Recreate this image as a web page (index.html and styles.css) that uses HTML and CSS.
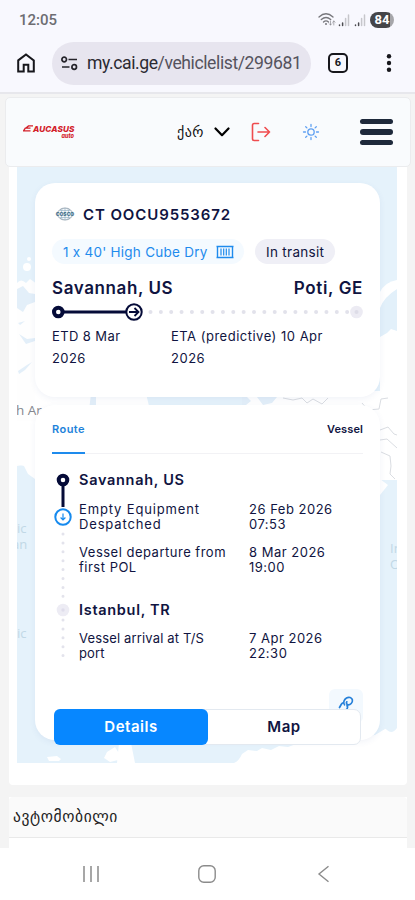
FILE: index.html
```html
<!DOCTYPE html>
<html lang="ka">
<head>
<meta charset="utf-8">
<meta name="viewport" content="width=device-width, initial-scale=1">
<title>my.cai.ge</title>
<link rel="stylesheet" href="styles.css">
</head>
<body>
<div class="statusbar">
  <span class="clock">12:05</span>
  <span class="status-icons">
    <svg width="49" height="16" viewBox="0 0 49 16" fill="none" stroke="#77777c" stroke-width="1.3" stroke-linecap="round">
      <path d="M1 5Q8 -1.500 15 5M3.300 7.500Q8 3.400 12.700 7.500M5.500 10Q8 7.700 10.500 10"/>
      <circle cx="8" cy="12" r="1" fill="#77777c" stroke="none"/>
      <path d="M12.500 9v4m-1.200-1.200 1.200 1.200 1.200-1.200M15.800 13v-4m-1.200 1.200 1.200-1.200 1.200 1.200" stroke-width=".6"/>
      <path d="M21.500 13v.6M24.600 11v2.600M37.500 13v.6M40.600 11v2.600" stroke="#4b4b50" stroke-width="1.500"/>
      <path d="M27.600 6.500v7.100M30.500 3v10.600M43.600 6.500v7.100M46.500 3v10.600" stroke="#c6c6cb" stroke-width="1.500"/>
    </svg>
    <span class="battery">84</span>
  </span>
</div>
<div class="toolbar">
  <svg class="home" width="18" height="20" viewBox="0 0 18 20" fill="none" stroke="#17171c" stroke-width="2"><path d="M1.200 7.400 9 1.400l7.800 6V18.600H11.300V11.800H6.700V18.600H1.200Z"/></svg>
  <div class="urlbar">
    <svg width="17" height="15" viewBox="0 0 17 15" fill="none" stroke="#25242b" stroke-width="1.700"><circle cx="3.200" cy="3.500" r="2.300"/><path d="M7.500 3.500H16M1 11h7.500"/><circle cx="13.200" cy="11" r="2.300"/></svg>
    <span class="url">my.cai.ge<span>/vehiclelist/299681</span></span>
  </div>
  <span class="tabs-count">6</span>
  <svg class="dots" width="6" height="18" viewBox="0 0 6 18" fill="#17171c"><circle cx="3" cy="2.300" r="2.200"/><circle cx="3" cy="9" r="2.200"/><circle cx="3" cy="15.700" r="2.200"/></svg>
</div>
<main class="page">
  <header class="site-header">
    <div class="logo"><span class="logo-main"><svg width="10" height="7" viewBox="0 0 10 7" fill="none" stroke="#d3202a" stroke-width="1.400"><path d="M10 .9H5.500L3 3M7.500 3.100H2.300L.5 5.900H7.500"/></svg>AUCASUS</span><span class="logo-sub">auto</span></div>
    <span class="lang">ქარ</span>
    <svg class="chev" width="16" height="10" viewBox="0 0 16 10" fill="none" stroke="#000" stroke-width="2.200" stroke-linecap="round" stroke-linejoin="round"><path d="M1.500 1.500 8 8.200l6.500-6.700"/></svg>
    <svg class="logout" width="20" height="20" viewBox="0 0 20 20" fill="none" stroke="#ef4c4f" stroke-width="1.600" stroke-linecap="round" stroke-linejoin="round"><path d="M7.500 1.500H3.200Q1.500 1.500 1.500 3.200V16.800Q1.500 18.500 3.200 18.500H7.500M7 10H18.500M14 5.500 18.500 10 14 14.500"/></svg>
    <svg class="sun" width="18" height="18" viewBox="0 0 18 18" fill="none" stroke="#5fa0f2" stroke-width="1.300" stroke-linecap="round"><circle cx="9" cy="9" r="3.200"/><path d="M9 1.500v2M9 14.500v2M1.500 9h2M14.500 9h2M3.700 3.700l1.200 1.200M13.100 13.100l1.200 1.200M3.700 14.300l1.200-1.200M13.100 4.900l1.200-1.200"/></svg>
    <div class="burger"><i></i><i></i><i></i></div>
  </header>
  <section class="tracker">
    <div class="map">
      <svg class="map-bg" width="380" height="597" viewBox="0 0 380 597">
        <rect width="380" height="597" fill="#e5f2fb"/>
        <path fill="#fefefe" d="M0 117Q4 112 9 117L13 113 20 118V297L0 300Z"/>
        <circle cx="10" cy="101" r="4" fill="#fff"/><circle cx="12" cy="93" r="2" fill="#fff"/>
        <path fill="#e3eff9" d="M0 123l6-3 6 7 6 1v8l-8 3-4 7-6-4ZM1 157l7-2-5 4ZM2 168l8 5 8-1v3l-9 3ZM1 205l9-6 5-3-7 8-6 4Z"/>
        <path fill="#fff" d="M18 215H126l6 25v60H18ZM225 225H380V314H225Z"/>
        <path fill="#e3eff9" d="M74 228h5v16h-7ZM225 231h5l4 4-5 4h-4ZM240 231h20l-5 6-9 2Z"/>
        <path fill="#fff" d="M380 114q-12 2-17 12V314h17Z"/>
        <path fill="#e2f0fa" d="M363 142q4-11 17-19v42l-6-2-4 4-7 4Z"/>
        <path fill="#fff" d="M0 255H18v58l-7-5-4-8-7-2Z"/>
        <path d="M266 232l10 2 9-2 5 5 6-4 9 5 6-6M345 237l6 7 11-1 2-10 7-1M363 264l8-3 6 7 3 1M363 274l7-1 10 9M364 286l9 4 1 10-1 8 5 5" fill="none" stroke="#dadde2"/>
        <path fill="#fff" d="M363 313l8 6-8 10ZM363 544l17 6V597H217q5-2 8-9l6-4 9 1 5-3 9 2 8-4 9 1 11-4 9-4 20 4 10-1 17-4 20-3 15-9Z"/>
        <path fill="#e5f2fb" d="M363 530h17v32q-5 7-10 2l-7-6Z"/>
        <path fill="#fff" d="M30 591l10-1 4 3-2 2H32ZM87 592l3-6 8-5 5 8-2 5-8 2ZM102 577h12l4 20h-18Z"/>
        <text class="land" x="-1" y="249">h Ar</text>
        <text class="sea" x="0" y="367">ic</text><text class="sea" x="-5" y="383">an</text><text class="sea" x="0" y="472">ic</text>
        <text class="sea" x="373" y="387">In</text><text class="sea" x="373" y="403">Oc</text>
      </svg>
      <article class="card summary">
        <div class="container-row">
          <svg width="20" height="14" viewBox="0 0 20 14"><ellipse cx="10" cy="7" rx="7.500" ry="6" fill="#f5f8fa" stroke="#8a9ba9" stroke-width=".9"/><path d="M5 3.500h10M5 10.500h10M10 1v12M7 2q-2 5 0 10M13 2q2 5 0 10" fill="none" stroke="#8dabbf" stroke-width=".6"/><text x="10" y="9" class="cosco">COSCO</text></svg>
          <strong>CT OOCU9553672</strong>
        </div>
        <div class="badges">
          <span class="badge blue"><span>1 x 40' High Cube Dry</span><svg width="18" height="14" viewBox="0 0 18 14" fill="none" stroke="#1e8bed"><path d="M.5 1.500h17M.5 12.500h17M1.500 1v12M16.500 1v12" stroke-width="1.400"/><path d="M5 3.500v7M7.700 3.500v7M10.300 3.500v7M13 3.500v7" stroke-width="1.200"/></svg></span>
          <span class="badge gray">In transit</span>
        </div>
        <div class="ports"><b class="from">Savannah, US</b><b class="to">Poti, GE</b></div>
        <svg class="track" width="311" height="18" viewBox="0 0 311 18" fill="none"><path d="M6 9H75" stroke="#050b38" stroke-width="3"/><circle cx="6.300" cy="9" r="4.300" fill="#fff" stroke="#050b38" stroke-width="4"/><circle cx="82" cy="9" r="7.700" stroke="#050b38" stroke-width="2"/><path d="M77 9h9M82.500 5l4 4-4 4" stroke="#050b38" stroke-width="1.800"/><path d="M98.500 9H296" stroke="#e2e2eb" stroke-width="4" stroke-linecap="round" stroke-dasharray="0 10.350"/><circle cx="304.500" cy="9" r="6.300" fill="#ecebf3"/><circle cx="304.500" cy="9" r="2" fill="#dddce7"/></svg>
        <div class="dates"><span class="etd">ETD 8 Mar 2026</span><span class="eta">ETA (predictive) 10 Apr 2026</span></div>
      </article>
      <article class="card details">
        <div class="tabs"><span class="active">Route</span><span>Vessel</span></div>
        <div class="route">
          <svg width="18" height="190" viewBox="0 0 18 190" fill="none"><path d="M9 10V36" stroke="#050b38" stroke-width="3"/><circle cx="9" cy="9" r="4.300" fill="#fff" stroke="#050b38" stroke-width="4"/><path d="M9 63V131M9 149v40" stroke="#e3e3ec" stroke-width="3" stroke-linecap="round" stroke-dasharray="0 8.900"/><circle cx="9" cy="46" r="7.700" fill="#fff" stroke="#168aee" stroke-width="2"/><path d="M9 42.500v6M6.600 46.500l2.400 2.400 2.400-2.400" stroke="#168aee" stroke-width="1.200"/><circle cx="9" cy="139" r="6.300" fill="#edecf4"/><circle cx="9" cy="139" r="1.700" fill="#dfddeb"/></svg>
          <div class="stops">
            <h3 class="s1">Savannah, US</h3>
            <p><span class="wide">Empty Equipment<br>Despatched</span><span>26 Feb 2026<br>07:53</span></p>
            <p><span>Vessel departure from<br>first POL</span><span>8 Mar 2026<br>19:00</span></p>
            <h3 class="s2">Istanbul, TR</h3>
            <p><span class="narrow">Vessel arrival at T/S<br>port</span><span>7 Apr 2026<br>22:30</span></p>
          </div>
        </div>
        <div class="share"><svg width="16" height="16" viewBox="0 0 16 16" fill="none" stroke="#2680d9" stroke-width="1.700" stroke-linecap="round"><path d="M6.500 8.800C4.800 6.800 6 3.500 8.500 2c2.300-1.400 5.500-.5 5.900 2 .4 2.800-2.200 5-4.200 4.800C8.600 8.600 8 7 8.800 5.800M5.200 6.800Q3.900 7.300 3.200 8.500L1.500 11.500M9 9q1.500 3-1 5"/></svg></div>
      </article>
      <div class="switch"><span class="on">Details</span><span>Map</span></div>
    </div>
  </section>
  <section class="vehicle"><h2>ავტომობილი</h2></section>
</main>
<nav class="sysnav">
  <svg width="18" height="18" viewBox="0 0 18 18" stroke="#8b8b8b" stroke-width="1.500"><path d="M2 1v16M9 1v16M16 1v16"/></svg>
  <svg width="18" height="18" viewBox="0 0 18 18" fill="none" stroke="#8b8b8b" stroke-width="1.400"><rect x=".8" y=".8" width="16.400" height="16.400" rx="5"/></svg>
  <svg width="18" height="18" viewBox="0 0 18 18" fill="none" stroke="#8b8b8b" stroke-width="1.400"><path d="M14.500 1.200 5 9l9.500 7.800"/></svg>
</nav>
</body>
</html>
```
FILE: styles.css
```css
* { box-sizing: border-box; }
body { margin: 0; width: 415px; height: 900px; overflow: hidden; display: flex; flex-direction: column; background: #fff; font-family: Inter, "Noto Sans", sans-serif; color: #101441; }
svg { display: block; flex: none; }
h2, h3, p { margin: 0; }
.statusbar { height: 38px; background: #f8f8fe; display: flex; justify-content: space-between; align-items: center; padding: 1px 21px 0 19px; flex: none; }
.clock { font: 500 15px/20px Roboto, sans-serif; letter-spacing: 0; color: #6d6d72; }
.status-icons { display: flex; align-items: center; gap: 3px; }
.battery { width: 24px; height: 16px; border-radius: 8px; background: linear-gradient(90deg, #454549 84%, #a6a6aa 84%); color: #fff; font: 700 13px/16px Roboto, sans-serif; text-align: center; }
.toolbar { height: 56px; flex: none; background: #f8f8fe; border-bottom: 2px solid #e7e7ec; display: flex; align-items: center; padding: 0 23px 4px 17px; }
.urlbar { flex: none; width: 259px; height: 43px; border-radius: 22px; background: #e7e5ef; margin-left: 17px; padding-left: 9px; display: flex; align-items: center; gap: 9px; }
.url { font: 400 17.600px/24px Roboto, sans-serif; letter-spacing: -.42px; color: #2b2a32; white-space: nowrap; }
.url span { color: #55535d; }
.tabs-count { flex: none; width: 20px; height: 20px; border: 2px solid #17171c; border-radius: 5px; margin-left: 17px; font: 700 11px/16px Roboto, sans-serif; color: #17171c; text-align: center; }
.dots { margin-left: 38px; }
.page { height: 754px; flex: none; overflow: hidden; background: #f4f4f4; padding-top: 3px; }
.site-header { position: relative; z-index: 3; width: 406px; height: 70px; margin-left: 5px; background: #f9fbfd; border: 1px solid #ebecee; border-radius: 5px; display: flex; align-items: center; padding-left: 17px; }
.logo { width: 54px; display: flex; flex-direction: column; color: #d3202a; font-style: italic; font-weight: 800; }
.logo-main { display: flex; align-items: center; font-size: 8.200px; line-height: 8px; letter-spacing: .1px; }
.logo-sub { font-size: 5.500px; line-height: 7px; align-self: flex-end; margin-right: 3px; }
.lang { font: 14px/20px "DejaVu Sans", sans-serif; letter-spacing: .5px; color: #111; width: 28px; margin-left: 100px; }
.chev { margin-left: 9px; }
.logout { margin-left: 21px; }
.sun { margin-left: 31px; }
.burger { margin-left: 40px; width: 33px; display: flex; flex-direction: column; gap: 5px; }
.burger i { height: 5.300px; border-radius: 3px; background: #1e293b; }
.tracker { width: 398px; height: 618px; margin-left: 9px; background: #fff; padding-left: 8px; border-radius: 0 0 4px 4px; }
.map { width: 380px; height: 596px; position: relative; padding: 16px 17px 0 18px; }
.map-bg { position: absolute; left: 0; top: -1px; }
.land { font: 13.500px "Open Sans", sans-serif; fill: #85888e; }
.sea { font: 13px "Open Sans", sans-serif; fill: #c1d8e6; }
.card { position: relative; background: #fff; border-radius: 20px; padding: 0 17px; box-shadow: 0 2px 6px rgba(60,90,150,.07); }
.summary { height: 214px; padding-top: 20px; }
.container-row { display: flex; align-items: center; height: 22px; gap: 8px; padding-left: 3px; }
.container-row strong { font-size: 15px; font-weight: 600; letter-spacing: .9px; white-space: nowrap; }
.cosco { font: 800 5px Inter, sans-serif; fill: #356985; text-anchor: middle; }
.badges { display: flex; gap: 11px; margin-top: 14px; }
.badge { height: 25px; border-radius: 13px; display: flex; align-items: center; font-size: 13.500px; padding: 0 11px; white-space: nowrap; }
.blue { width: 192px; background: #f4faff; color: #1e8bed; justify-content: space-between; letter-spacing: .25px; padding-right: 10px; }
.gray { width: 80px; background: #efeff6; letter-spacing: .3px; }
.ports { display: flex; justify-content: space-between; margin-top: 13px; font-size: 17px; line-height: 22px; white-space: nowrap; }
.ports b, .stops h3 { font-weight: 600; }
.from { letter-spacing: .6px; }
.to { letter-spacing: .65px; }
.track { margin-top: 4px; }
.dates { display: flex; gap: 32px; font-size: 13px; line-height: 22px; margin-top: 4px; }
.etd { width: 87px; letter-spacing: .4px; }
.eta { width: 170px; letter-spacing: .5px; }
.details { height: 335px; margin-top: 8px; overflow: hidden; }
.tabs { height: 49px; display: flex; justify-content: space-between; border-bottom: 1px solid #f2f2f5; font-size: 11px; font-weight: 600; line-height: 16px; padding-top: 16px; letter-spacing: .1px; }
.tabs .active { letter-spacing: .45px; color: #1e83da; border-bottom: 2px solid #1e8bed; margin-bottom: -1px; }
.route { display: flex; margin: 17px 0 0 2px; gap: 7px; }
.stops h3 { font-size: 14.500px; line-height: 18px; letter-spacing: .7px; }
.stops p { display: grid; grid-template-columns: 170px 100px; font-size: 13px; line-height: 15.300px; letter-spacing: .5px; margin-top: 12.500px; white-space: nowrap; }
.stops .wide { letter-spacing: .85px; }
.stops .narrow { letter-spacing: .15px; }
.stops .s2 { margin-top: 25.500px; }
.share { width: 34px; height: 34px; margin: 27px 0 0 auto; border-radius: 6px; background: #f3f9fe; padding: 7px 0 0 9px; }
.switch { position: absolute; left: 37px; top: 542px; width: 307px; height: 36px; display: flex; background: #fff; border: 1px solid #e3e9f0; border-radius: 7px; font-size: 15px; font-weight: 600; line-height: 34px; letter-spacing: .5px; text-align: center; }
.switch span { flex: 1; }
.switch .on { flex: none; width: 154px; height: 36px; line-height: 36px; margin: -1px 0 0 -1px; background: #0787ff; color: #fff; border-radius: 6px; }
.vehicle { width: 398px; height: 60px; margin: 12px 0 0 9px; background: #fff; }
.vehicle h2 { height: 41px; background: #fafafa; border-bottom: 1px solid #e9e9e9; border-radius: 4px 4px 0 0; font: 15.500px/40px "DejaVu Sans", sans-serif; letter-spacing: .6px; color: #222; padding-left: 4px; }
.sysnav { height: 52px; flex: none; display: flex; align-items: center; gap: 98px; padding-left: 82px; background: #fff; }
```
